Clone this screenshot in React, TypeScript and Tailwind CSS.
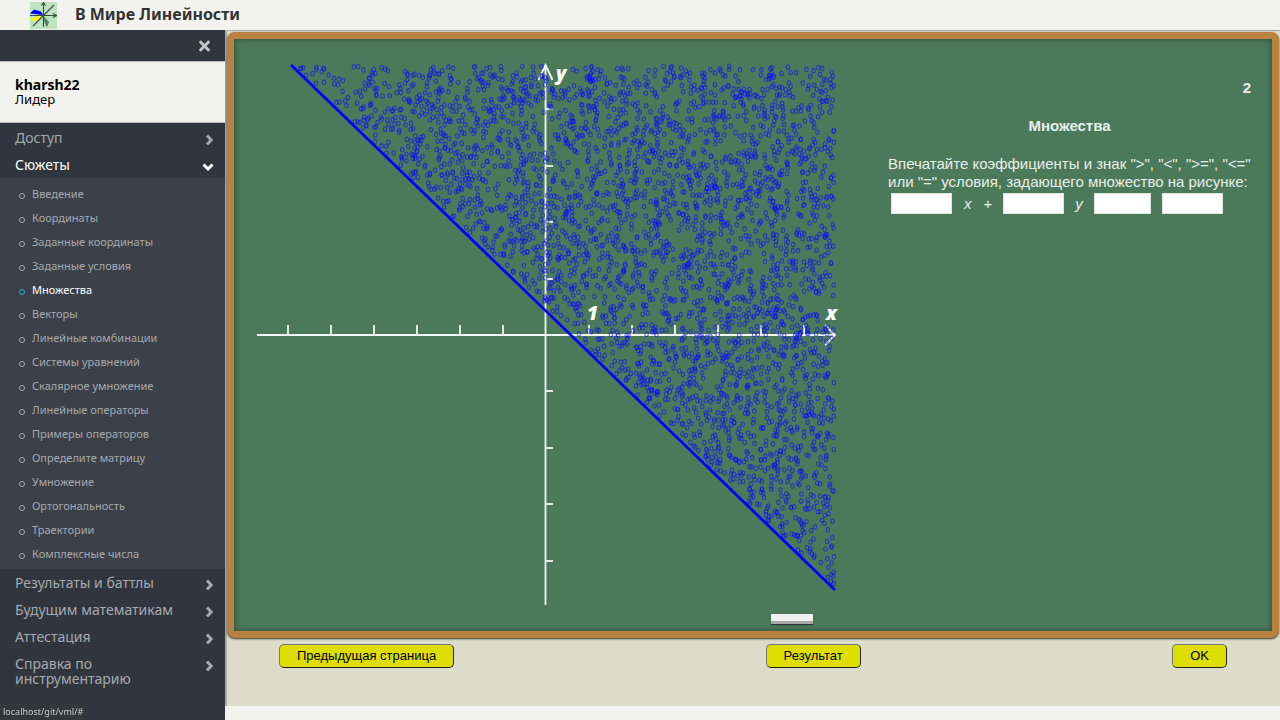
import React, { useMemo, useState } from 'react';
import { FaTimes } from 'react-icons/fa';

const topics = [
  'Введение',
  'Координаты',
  'Заданные координаты',
  'Заданные условия',
  'Множества',
  'Векторы',
  'Линейные комбинации',
  'Системы уравнений',
  'Скалярное умножение',
  'Линейные операторы',
  'Примеры операторов',
  'Определите матрицу',
  'Умножение',
  'Ортогональность',
  'Траектории',
  'Комплексные числа',
];

const bottomMenu = ['Результаты и баттлы', 'Будущим математикам', 'Аттестация', 'Справка по инструментарию'];

const Logo = () => (
  <svg viewBox="0 0 27 27" className="mt-px h-[27px] w-[27px]" aria-hidden="true">
    <rect width="27" height="27" fill="#bfe3bf" />
    <path d="M0 11.500 4 7.500 11 9.500 13 13z" fill="#00f" />
    <path d="M0 17 12 14 7.500 19.500z" fill="#ff0" stroke="#ff0" strokeWidth="0.800" />
    <path d="M13.500 14l5.500 6-2 5.500-2.500-5z" fill="#4d8565" />
    <path
      d="M0 13.500h26M23 11.500l4 2-4 2M13.500 25V1M11.500 3.500l2-3 2 3M3 24 24 3"
      fill="none"
      stroke="#3b4a42"
      strokeWidth="1.100"
    />
  </svg>
);

const Chevron = ({ down }: { down?: boolean }) => (
  <svg viewBox="0 0 12 11" className="mt-1 h-[11px] w-3 shrink-0" fill="none" stroke="currentColor" strokeWidth="3" aria-hidden="true">
    {down ? <path d="M1.500 3.500 6 8l4.500-4.500" /> : <path d="M5 1.500 9.200 6 5 10.500" />}
  </svg>
);

type Point = { x: number; y: number };

// Случайные точки полуплоскости выше прямой
const makePoints = (count: number): Point[] => {
  const points: Point[] = [];
  let seed = 20317;
  const next = () => {
    seed = (seed + 0x6d2b79f5) | 0;
    let t = Math.imul(seed ^ (seed >>> 15), 1 | seed);
    t = (t + Math.imul(t ^ (t >>> 7), 61 | t)) ^ t;
    return ((t ^ (t >>> 14)) >>> 0) / 4294967296;
  };
  while (points.length < count) {
    const x = 36 + next() * 541;
    const y = 4 + next() * 522;
    const aboveLine = y < 3 + (x - 34) * 0.965 - 4;
    // место под подписи осей
    const nearY = x > 295 && x < 313 && y < 26;
    const nearX = x > 562 && y > 241 && y < 265;
    const nearOne = x > 328 && x < 344 && y > 240 && y < 264;
    if (aboveLine && !nearY && !nearX && !nearOne) points.push({ x, y });
  }
  return points;
};

const Plot = () => {
  const points = useMemo(() => makePoints(3400), []);
  const xTicks = [31, 74, 117, 160, 203, 246, 332, 375, 418, 461, 504, 547];
  const yTicks = [47, 104, 160, 217, 329, 386, 442, 499];

  return (
    <svg viewBox="0 0 580 543" className="h-[543px] w-[580px] shrink-0 overflow-visible" role="img" aria-label="Множество">
      <g stroke="#f2f5f2" strokeWidth="1.800" fill="none">
        <path d="M0 273H578M568 263l10 10-10 10" />
        <path d="M288.500 543V3M281.500 18l7-15 7 15" />
        {xTicks.map((x) => (
          <path key={x} d={`M${x} 273v-10`} />
        ))}
        {yTicks.map((y) => (
          <path key={y} d={`M289 ${y}h7`} />
        ))}
      </g>
      <g stroke="#0a0aff" strokeWidth="1.100" strokeOpacity="0.550" fill="none">
        {points.map((p, i) => (
          <ellipse key={i} cx={p.x} cy={p.y} rx="1.700" ry="2.200" />
        ))}
      </g>
      <path d="M34 3 578 528" stroke="#00f" strokeWidth="2.800" />
      <g className="fill-white font-['Open_Sans',sans-serif] text-[19px] font-extrabold italic">
        <text x="299" y="18">y</text>
        <text x="569" y="258">x</text>
        <text x="330" y="258">1</text>
      </g>
    </svg>
  );
};

type MenuItemProps = { label: string; open?: boolean };

const MenuItem: React.FC<MenuItemProps> = ({ label, open }) => (
  <a
    href="#"
    className={`flex items-start justify-between py-1.5 pr-[11px] pl-[15px] text-[14px] leading-[15px] ${
      open ? 'text-white' : 'text-[#a5a9b0]'
    }`}
  >
    <span className="max-w-[170px]">{label}</span>
    <Chevron down={open} />
  </a>
);

const Sidebar = () => (
  <aside className="flex w-[225px] shrink-0 flex-col bg-[#31353d]">
    <div className="flex h-[31px] items-center justify-end pr-[14px]">
      <button type="button" aria-label="Закрыть" className="text-[#c4c6c9]">
        <FaTimes className="h-4 w-[13px]" />
      </button>
    </div>
    <div className="flex h-[62px] flex-col justify-center border-y border-[#b5b7b8] bg-[#f2f3ee] px-[15px] text-black">
      <strong className="text-[14px] leading-[15px] font-bold">kharsh22</strong>
      <span className="text-[13px] leading-[15px]">Лидер</span>
    </div>
    <nav className="pt-px">
      <MenuItem label="Доступ" />
      <MenuItem label="Сюжеты" open />
      <ul className="bg-[#3c4048] pt-1 pb-[3px]">
        {topics.map((topic) => {
          const active = topic === 'Множества';
          return (
            <li key={topic}>
              <a
                href="#"
                className={`flex h-6 items-center gap-[7px] pl-[19px] text-[11px] ${
                  active ? 'text-white' : 'text-[#a5a9b0]'
                }`}
              >
                <span
                  className={`mt-1 h-1.5 w-1.5 rounded-full border ${active ? 'border-[#16b4e8]' : 'border-[#a5a9b0]'}`}
                />
                {topic}
              </a>
            </li>
          );
        })}
      </ul>
      {bottomMenu.map((label) => (
        <MenuItem key={label} label={label} />
      ))}
    </nav>
  </aside>
);

type Field = 'a' | 'b' | 'sign' | 'c';

const TaskForm = () => {
  const [values, setValues] = useState<Record<Field, string>>({ a: '', b: '', sign: '', c: '' });

  const renderInput = (name: Field, label: string) => (
    <input
      type="text"
      aria-label={label}
      value={values[name]}
      onChange={(e) => setValues({ ...values, [name]: e.target.value })}
      className={`h-[21px] border border-[#dfe5df] bg-white px-1 text-black ${name === 'sign' ? 'w-[57px]' : 'w-[61px]'}`}
    />
  );

  return (
    <form className="flex-1 pt-[17px] pl-[51px] text-[15px] leading-[18px] text-[#e8efe8]">
      <p className="text-right font-bold">2</p>
      <h2 className="mt-5 text-center font-bold">Множества</h2>
      <p className="mt-5">
        Впечатайте коэффициенты и знак "&gt;", "&lt;", "&gt;=", "&lt;=" или "=" условия, задающего множество на рисунке:
      </p>
      <div className="mt-0.5 flex items-center pl-[3px]">
        {renderInput('a', 'Коэффициент при x')}
        <i className="px-3">x</i>
        <span className="pr-[11px]">+</span>
        {renderInput('b', 'Коэффициент при y')}
        <i className="px-[11px]">y</i>
        <span className="flex gap-[11px]">
          {renderInput('sign', 'Знак')}
          {renderInput('c', 'Свободный член')}
        </span>
      </div>
    </form>
  );
};

const BoardButton = ({ children }: { children: React.ReactNode }) => (
  <button
    type="button"
    className="h-6 rounded-[5px] border border-t-[#767676] border-r-[#22220a] border-b-[#22220a] border-l-[#767676] bg-[#dddd00] px-[17px] text-[13px] leading-[22px] text-black"
  >
    {children}
  </button>
);

export default function App() {
  return (
    <div className="flex min-h-screen flex-col bg-[#f2f3ee] font-['Noto_Sans',sans-serif]">
      <header className="flex h-[30px] items-center gap-[18px] pl-[30px]">
        <Logo />
        <h1 className="pb-0.5 text-[16px] leading-5 font-bold text-[#333]">В Мире Линейности</h1>
      </header>

      <div className="flex flex-1">
        <Sidebar />
        <main className="min-w-0 flex-1 pb-[14px] font-['Liberation_Sans',sans-serif]">
          <div className="h-full border-t border-l-2 border-[#a7a8aa] bg-[#dddcca] pt-px pr-px">
            <section className="relative flex h-[606px] rounded-lg border-[7px] border-[#b9823e] bg-[#4b7a5a] pt-[23px] pr-[21px] pl-[23px] shadow-[0_1px_2px_#333]">
              <div className="pointer-events-none absolute inset-0 shadow-[inset_0_0_6px_#2e4b38]" />
              <Plot />
              <TaskForm />
              <div className="absolute right-[459px] bottom-[7px] h-[10px] w-[42px] border-b-[3px] border-[#a8a8a8] bg-[#f0f0f0] shadow-[0_1px_1px_#333]" />
            </section>
            <div className="flex justify-between px-[52px] pt-1.5">
              <BoardButton>Предыдущая страница</BoardButton>
              <BoardButton>Результат</BoardButton>
              <BoardButton>OK</BoardButton>
            </div>
          </div>
        </main>
      </div>

      <div className="fixed bottom-0 left-0 h-4 w-[84px] rounded-tr bg-[#35363a] pl-[3px] text-[9px] leading-4 text-[#c8c8c8]">
        localhost/git/vml/#
      </div>
    </div>
  );
}
